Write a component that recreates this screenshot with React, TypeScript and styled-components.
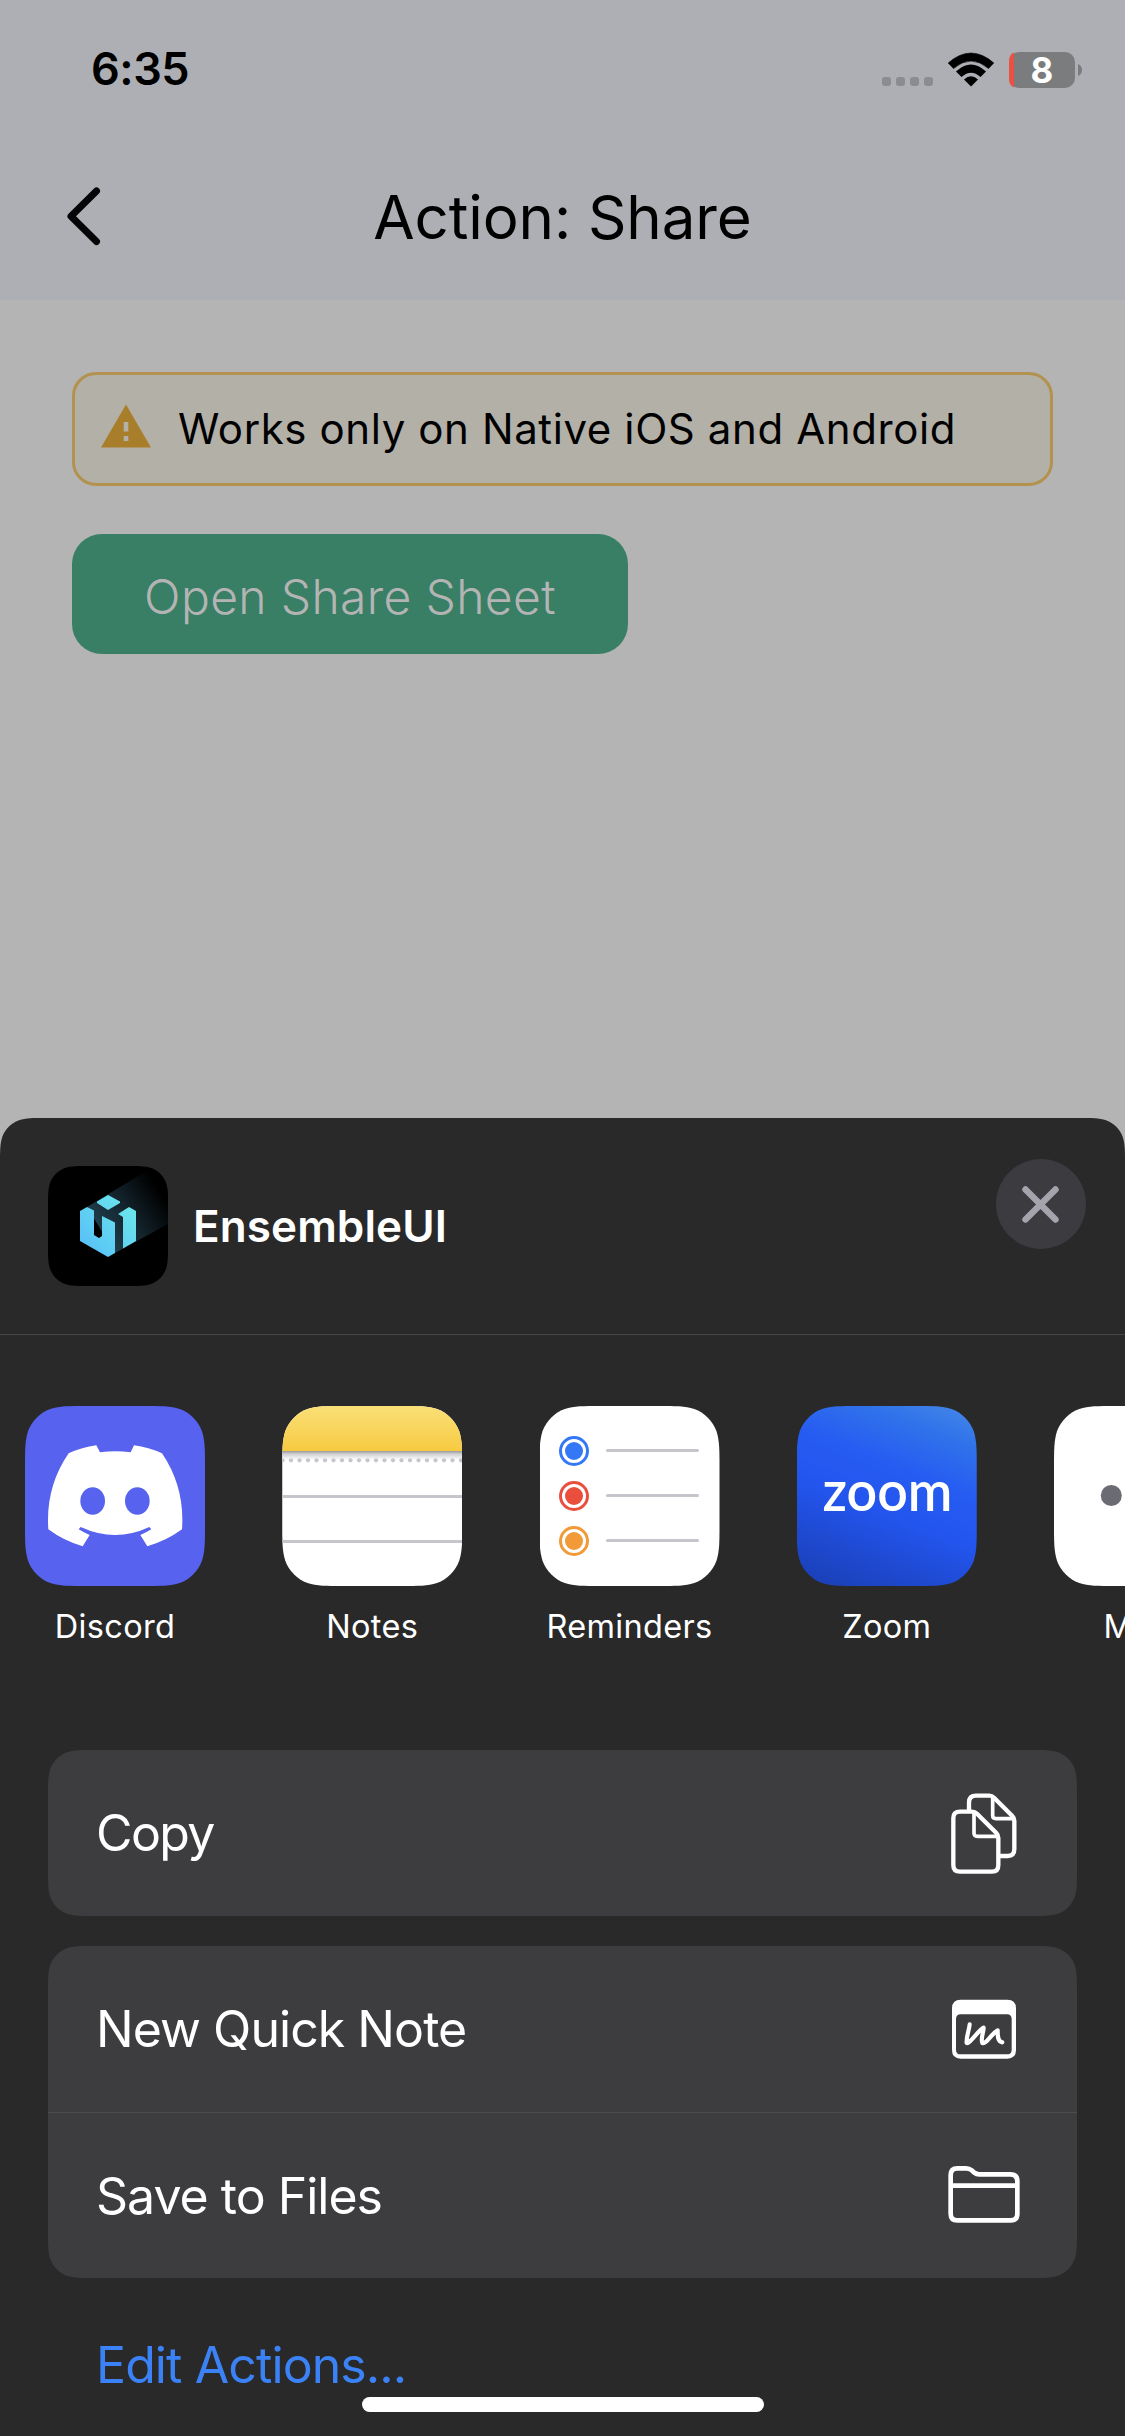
import React from "react";
import styled, { createGlobalStyle } from "styled-components";

/* Continuous-corner rectangle outline, as used by iOS icons and cards. */
function squircle(w: number, h: number, r: number): string {
  const a = 1.528665 * r;
  const b = 1.088493 * r;
  const c = 0.868407 * r;
  const d = 0.631494 * r;
  const e = 0.074911 * r;
  const f = 0.372824 * r;
  const g = 0.16906 * r;
  return [
    `M${a} 0 L${w - a} 0`,
    `C${w - b} 0 ${w - c} 0 ${w - d} ${e}`,
    `C${w - f} ${g} ${w - g} ${f} ${w - e} ${d}`,
    `C${w} ${c} ${w} ${b} ${w} ${a}`,
    `L${w} ${h - a}`,
    `C${w} ${h - b} ${w} ${h - c} ${w - e} ${h - d}`,
    `C${w - g} ${h - f} ${w - f} ${h - g} ${w - d} ${h - e}`,
    `C${w - c} ${h} ${w - b} ${h} ${w - a} ${h}`,
    `L${a} ${h}`,
    `C${b} ${h} ${c} ${h} ${d} ${h - e}`,
    `C${f} ${h - g} ${g} ${h - f} ${e} ${h - d}`,
    `C0 ${h - c} 0 ${h - b} 0 ${h - a}`,
    `L0 ${a}`,
    `C0 ${b} 0 ${c} ${e} ${d}`,
    `C${g} ${f} ${f} ${g} ${d} ${e}`,
    `C${c} 0 ${b} 0 ${a} 0 Z`,
  ].join(" ");
}

const Global = createGlobalStyle`
  * { box-sizing: border-box; }
  body { margin: 0; background: #b4b4b4; }
`;

const Screen = styled.div`
  width: 1125px;
  height: 2436px;
  display: flex;
  flex-direction: column;
  overflow: hidden;
  background: #b4b4b4;
  font-family: Inter, "Liberation Sans", sans-serif;
  color: #000;
`;

const Header = styled.header`
  height: 300px;
  flex: none;
  background: #aeafb4;
`;

const StatusBar = styled.div`
  height: 139px;
  padding: 0 43px 0 91px;
  display: flex;
  align-items: center;
  justify-content: space-between;
`;

const Clock = styled.span`
  font-size: 45px;
  font-weight: 600;
  line-height: 60px;
  letter-spacing: -0.5px;
  padding-bottom: 1px;
`;

const StatusIcons = styled.svg`
  display: block;
  width: 200px;
  height: 36px;
  overflow: visible;
`;

const BatteryText = styled.text`
  font-size: 35px;
  font-weight: 700;
  fill: #fff;
  text-anchor: middle;
`;

const NavBar = styled.div`
  display: grid;
  grid-template-columns: 180px 1fr 180px;
  align-items: center;
  height: 156px;
`;

const BackButton = styled.button`
  width: 34px;
  height: 60px;
  margin: 0 0 0 67px;
  padding: 0;
  border: 0;
  background: none;
  svg { display: block; }
`;

const Title = styled.h1`
  margin: 0;
  text-align: center;
  font-size: 60px;
  font-weight: 400;
  line-height: 80px;
  letter-spacing: -0.1px;
`;

const Content = styled.main`
  height: 818px;
  flex: none;
  padding: 72px 72px 0 72px;
  display: flex;
  flex-direction: column;
  align-items: flex-start;
  gap: 48px;
`;

const Banner = styled.div`
  width: 981px;
  height: 114px;
  display: flex;
  align-items: center;
  gap: 27px;
  padding: 0 26px;
  border: 3px solid #b2924e;
  border-radius: 24px;
  background: #b3b0a8;
`;

const BannerText = styled.span`
  font-size: 42px;
  font-weight: 400;
  line-height: 60px;
  letter-spacing: 0.6px;
  white-space: nowrap;
`;

const WarningIcon = styled.svg`
  width: 50px;
  height: 44px;
  margin-top: -6px;
`;

const OpenButton = styled.button`
  width: 556px;
  height: 120px;
  padding: 5px 0 0;
  border: 0;
  border-radius: 30px;
  background: #397f66;
  color: #b4b4b4;
  font: 300 48px/60px Inter, "Liberation Sans", sans-serif;
  letter-spacing: 0.35px;
`;

const Sheet = styled.section`
  height: 1318px;
  flex: none;
  display: flex;
  flex-direction: column;
  background: #292929;
  color: #fff;
  clip-path: path("${squircle(1125, 1400, 30)}");
`;

const SheetHeader = styled.div`
  height: 217px;
  flex: none;
  display: flex;
  align-items: flex-start;
  padding: 0 39px 0 48px;
  border-bottom: 1px solid #464649;
`;

const AppLogo = styled.svg`
  width: 120px;
  height: 120px;
  margin: 48px 0 0;
  flex: none;
`;

const AppTitle = styled.h2`
  flex: 1;
  margin: 78px 0 0 25px;
  font-size: 44px;
  font-weight: 600;
  line-height: 60px;
  letter-spacing: 0.1px;
`;

const CloseButton = styled.button`
  width: 90px;
  height: 90px;
  margin: 41px 0 0;
  padding: 0;
  border: 0;
  border-radius: 50%;
  background: #3c3b3f;
  svg { display: block; }
`;

const AppRow = styled.div`
  height: 415px;
  flex: none;
  display: flex;
  gap: 77.25px;
  padding: 71px 0 0 25px;
  overflow: hidden;
`;

const AppItem = styled.div`
  width: 180px;
  flex: none;
  display: flex;
  flex-direction: column;
  align-items: center;
  gap: 20px;
`;

const AppTile = styled.svg`
  display: block;
  width: 180px;
  height: 180px;
  flex: none;
  clip-path: path("${squircle(180, 180, 40)}");
`;

const AppLabel = styled.span`
  font-size: 32.5px;
  line-height: 41px;
  letter-spacing: 0.32px;
  white-space: nowrap;
`;

const LogoText = styled.text`
  font-family: Lato, "Liberation Sans", sans-serif;
  font-size: 55px;
  font-weight: 600;
  fill: #fff;
`;

const Actions = styled.div`
  display: flex;
  flex-direction: column;
  gap: 30px;
  padding: 0 48px;
`;

const Card = styled.div<{ $rows: number }>`
  width: 1029px;
  height: ${(p) => p.$rows * 166}px;
  display: flex;
  flex-direction: column;
  background: #3d3d3f;
  clip-path: path("${(p) => squircle(1029, p.$rows * 166, 30)}");
`;

const ActionRow = styled.div`
  flex: 1;
  display: flex;
  align-items: center;
  justify-content: space-between;
  padding: 0 48px;
  & + & { border-top: 1px solid #4c4c4e; }
`;

const ActionLabel = styled.span<{ $spacing: number }>`
  font-size: 50px;
  line-height: 60px;
  letter-spacing: ${(p) => p.$spacing}px;
  white-space: nowrap;
  ${ActionRow} + ${ActionRow} & { padding-top: 2px; }
`;

const ActionIcon = styled.svg`
  width: 90px;
  height: 90px;
  flex: none;
`;

const Footer = styled.div`
  flex: 1;
  display: flex;
  flex-direction: column;
  align-items: flex-start;
  padding: 57px 0 0 96px;
`;

const EditLink = styled.a`
  color: #3b82f7;
  font-size: 50px;
  line-height: 60px;
  letter-spacing: -0.9px;
`;

const HomeIndicator = styled.div`
  width: 402px;
  height: 15px;
  margin: 2px 0 0 266px;
  border-radius: 8px;
  background: #fff;
`;

/* Icon canvases below use a 3-unit-per-pixel grid. */

const DiscordTile = () => (
  <AppTile viewBox="15 48 540 540">
    <rect x="15" y="48" width="540" height="540" fill="#5762ee" />
    <path
      fill="#fff"
      d="M146 190Q186 172 229 166L240 187Q286 180 332 187L342 166Q386 172 426 190Q495 292 486 418Q440 452 382 469L361 435Q378 428 394 418L388 411Q286 459 182 411L176 418Q192 428 209 435L188 469Q130 452 85 418Q76 292 146 190Z"
    />
    <ellipse cx="218" cy="333" rx="37" ry="41" fill="#5762ee" />
    <ellipse cx="352" cy="333" rx="37" ry="41" fill="#5762ee" />
  </AppTile>
);

const NotesTile = () => (
  <AppTile viewBox="36 48 540 540">
    <defs>
      <linearGradient id="notesTop" x1="0" y1="0" x2="0" y2="1">
        <stop offset="0" stopColor="#fae078" />
        <stop offset="1" stopColor="#f7ca41" />
      </linearGradient>
      <linearGradient id="notesShade" x1="0" y1="0" x2="0" y2="1">
        <stop offset="0" stopColor="#9a9a9d" />
        <stop offset="0.35" stopColor="#d2d2d4" />
        <stop offset="1" stopColor="#fff" />
      </linearGradient>
    </defs>
    <rect x="36" y="48" width="540" height="540" fill="#fff" />
    <rect x="36" y="48" width="540" height="135" fill="url(#notesTop)" />
    <rect x="36" y="183" width="540" height="27" fill="url(#notesShade)" />
    {Array.from({ length: 22 }, (_, i) => (
      <circle key={i} cx={37.5 + i * 25.5} cy="211" r="6.3" fill="#c6c5cb" />
    ))}
    <rect x="36" y="315" width="540" height="9" fill="#c6c5cb" />
    <rect x="36" y="450" width="540" height="9" fill="#c6c5cb" />
  </AppTile>
);

const RemindersTile = () => (
  <AppTile viewBox="30 48 540 540">
    <rect x="30" y="48" width="540" height="540" fill="#fff" />
    {["#3478f6", "#ea4e3d", "#f19a37"].map((color, i) => (
      <g key={color} transform={`translate(0 ${i * 135})`}>
        <circle cx="132" cy="183" r="40.5" fill="none" stroke={color} strokeWidth="9" />
        <circle cx="132" cy="183" r="27" fill={color} />
        <rect x="228" y="177" width="279" height="9" rx="4.5" fill="#c6c5cb" />
      </g>
    ))}
  </AppTile>
);

const ZoomTile = () => (
  <AppTile viewBox="0 0 180 180">
    <defs>
      <linearGradient id="zoomBg" gradientUnits="userSpaceOnUse" x1="50" y1="196" x2="135" y2="-20">
        <stop offset="0" stopColor="#1a3fb4" />
        <stop offset="0.42" stopColor="#2355ee" />
        <stop offset="0.62" stopColor="#265cf2" />
        <stop offset="0.82" stopColor="#3072ea" />
        <stop offset="1" stopColor="#478be8" />
      </linearGradient>
    </defs>
    <rect width="180" height="180" fill="url(#zoomBg)" />
    <LogoText x="25.500" y="104.500" textLength="130" lengthAdjust="spacingAndGlyphs">zoom</LogoText>
  </AppTile>
);

const MoreTile = () => (
  <AppTile viewBox="0 0 180 180">
    <rect width="180" height="180" fill="#fff" />
    <circle cx="57.3" cy="89.5" r="10.5" fill="#6b6b74" />
    <circle cx="90" cy="89.5" r="10.5" fill="#6b6b74" />
    <circle cx="122.7" cy="89.5" r="10.5" fill="#6b6b74" />
  </AppTile>
);

const apps = [
  { name: "Discord", Tile: DiscordTile },
  { name: "Notes", Tile: NotesTile },
  { name: "Reminders", Tile: RemindersTile },
  { name: "Zoom", Tile: ZoomTile },
  { name: "More", Tile: MoreTile },
];

const CopyIcon = () => (
  <ActionIcon viewBox="57 144 270 270" fill="none" stroke="#fff" strokeWidth="13" strokeLinejoin="round">
    <path d="M147 212V188Q147 167 168 167H208Q216 167 222 173L277 228Q283 234 283 242V328Q283 348 263 348H240" />
    <path d="M218 170V226Q218 236 228 236H280" strokeWidth="11" />
    <path d="M120 215H156Q165 215 171 221L229 279Q235 285 235 294V376Q235 395 216 395H120Q100 395 100 376V234Q100 215 120 215Z" />
    <path d="M162 219V279Q162 289 172 289H232" strokeWidth="11" />
  </ActionIcon>
);

const QuickNoteIcon = () => (
  <ActionIcon viewBox="57 163 270 270">
    <path
      fill="#fff"
      fillRule="evenodd"
      d="M122 210H262Q288 210 288 236V361Q288 387 262 387H122Q96 387 96 361V236Q96 210 122 210ZM122 254Q108 254 108 268V360Q108 374 122 374H261Q275 374 275 360V268Q275 254 261 254Z"
    />
    <path
      d="M149 284C147 304 138 322 140 340C148 344 174 303 191 294C191 308 181 328 187 340C200 344 214 312 233 302C233 318 232 336 247 338"
      fill="none"
      stroke="#fff"
      strokeWidth="12.5"
      strokeLinecap="round"
      strokeLinejoin="round"
    />
  </ActionIcon>
);

const FolderIcon = () => (
  <ActionIcon viewBox="57 661 270 270" fill="none" stroke="#fff" strokeWidth="14" strokeLinejoin="round">
    <path d="M112 716H138Q148 716 155 722L163 729Q169 734 178 734H271Q292 734 292 755V852Q292 872 272 872H112Q92 872 92 852V736Q92 716 112 716Z" />
    <path d="M92 768H292" />
  </ActionIcon>
);

const EnsembleLogo = () => (
  <AppLogo viewBox="0 0 120 120">
    <defs>
      <clipPath id="logoClip">
        <path d={squircle(120, 120, 27)} />
      </clipPath>
      <linearGradient id="logoFill" gradientUnits="userSpaceOnUse" x1="32" y1="82" x2="86" y2="40">
        <stop offset="0" stopColor="#58bff8" />
        <stop offset="1" stopColor="#6be7ec" />
      </linearGradient>
      <linearGradient id="logoBeam" gradientUnits="userSpaceOnUse" x1="48" y1="62" x2="110" y2="22">
        <stop offset="0" stopColor="#1f3f4c" />
        <stop offset="0.5" stopColor="#13222b" />
        <stop offset="1" stopColor="#000" />
      </linearGradient>
    </defs>
    <g clipPath="url(#logoClip)">
      <rect width="120" height="120" fill="#000" />
      <path d="M39 41L120 -8V58L67 87Z" fill="url(#logoBeam)" />
      <path
        d="M60 29L72 35.5V37L60 44L49 37V35.5ZM32 45L39 41L46 44.5V69L51 72L54 70V50L67 56.5V87L60 91L32 75ZM70 48L81 41L88 45V75L75 82.500V51Z"
        fill="url(#logoFill)"
      />
    </g>
  </AppLogo>
);

export default function App() {
  return (
    <>
      <Global />
      <Screen>
        <Header>
          <StatusBar>
            <Clock>6:35</Clock>
            <StatusIcons viewBox="882 51 200 36">
              {[0, 1, 2, 3].map((i) => (
                <rect key={i} x={882 + i * 14} y="76" width="9" height="9" rx="3" fill="#8b8c90" />
              ))}
              <path d="M948.200 62Q971 42 993.800 62L988.500 67.500Q971 52.500 953.500 67.500Z" stroke="#000" strokeWidth="0.6" strokeLinejoin="round" />
              <path d="M956 70.500Q971 56.500 986 70.500L980.500 76Q971 67.500 961.500 76Z" />
              <path d="M964 78.500Q971 72 978 78.500L971 85.500Z" />
              <rect x="1009" y="51" width="66" height="36" rx="10" fill="#7b7c7d" />
              <path d="M1014 51.500V86.500Q1009 85 1009 77V61Q1009 53 1014 51.500Z" fill="#ea5143" />
              <path d="M1078 63Q1082 64.500 1082 69T1078 75Z" fill="#7b7c7d" />
              <BatteryText x="1042" y="81.500">8</BatteryText>
            </StatusIcons>
          </StatusBar>
          <NavBar>
            <BackButton aria-label="Back">
              <svg width="34" height="60" viewBox="0 0 34 60" fill="none" stroke="#050506" strokeWidth="7" strokeLinecap="round" strokeLinejoin="round">
                <path d="M29.500 4L4 29.300L29.500 54.600" />
              </svg>
            </BackButton>
            <Title>Action: Share</Title>
          </NavBar>
        </Header>

        <Content>
          <Banner>
            <WarningIcon viewBox="0 0 50 44">
              <path d="M25 0.500L50 43.500H0Z" fill="#a97e2b" />
              <rect x="22.700" y="18" width="4.600" height="9.500" fill="#b3b0a8" />
              <rect x="22.700" y="32" width="4.600" height="5" fill="#b3b0a8" />
            </WarningIcon>
            <BannerText>Works only on Native iOS and Android</BannerText>
          </Banner>
          <OpenButton>Open Share Sheet</OpenButton>
        </Content>

        <Sheet>
          <SheetHeader>
            <EnsembleLogo />
            <AppTitle>EnsembleUI</AppTitle>
            <CloseButton aria-label="Close">
              <svg width="90" height="90" viewBox="0 0 90 90" stroke="#a5a4ac" strokeWidth="6.400" strokeLinecap="round">
                <path d="M29.500 30.500L59.500 60.500M59.500 30.500L29.500 60.500" />
              </svg>
            </CloseButton>
          </SheetHeader>

          <AppRow>
            {apps.map(({ name, Tile }) => (
              <AppItem key={name}>
                <Tile />
                <AppLabel>{name}</AppLabel>
              </AppItem>
            ))}
          </AppRow>

          <Actions>
            <Card $rows={1}>
              <ActionRow>
                <ActionLabel $spacing={-1.6}>Copy</ActionLabel>
                <CopyIcon />
              </ActionRow>
            </Card>
            <Card $rows={2}>
              <ActionRow>
                <ActionLabel $spacing={-0.95}>New Quick Note</ActionLabel>
                <QuickNoteIcon />
              </ActionRow>
              <ActionRow>
                <ActionLabel $spacing={-1}>Save to Files</ActionLabel>
                <FolderIcon />
              </ActionRow>
            </Card>
          </Actions>

          <Footer>
            <EditLink>Edit Actions...</EditLink>
            <HomeIndicator />
          </Footer>
        </Sheet>
      </Screen>
    </>
  );
}
